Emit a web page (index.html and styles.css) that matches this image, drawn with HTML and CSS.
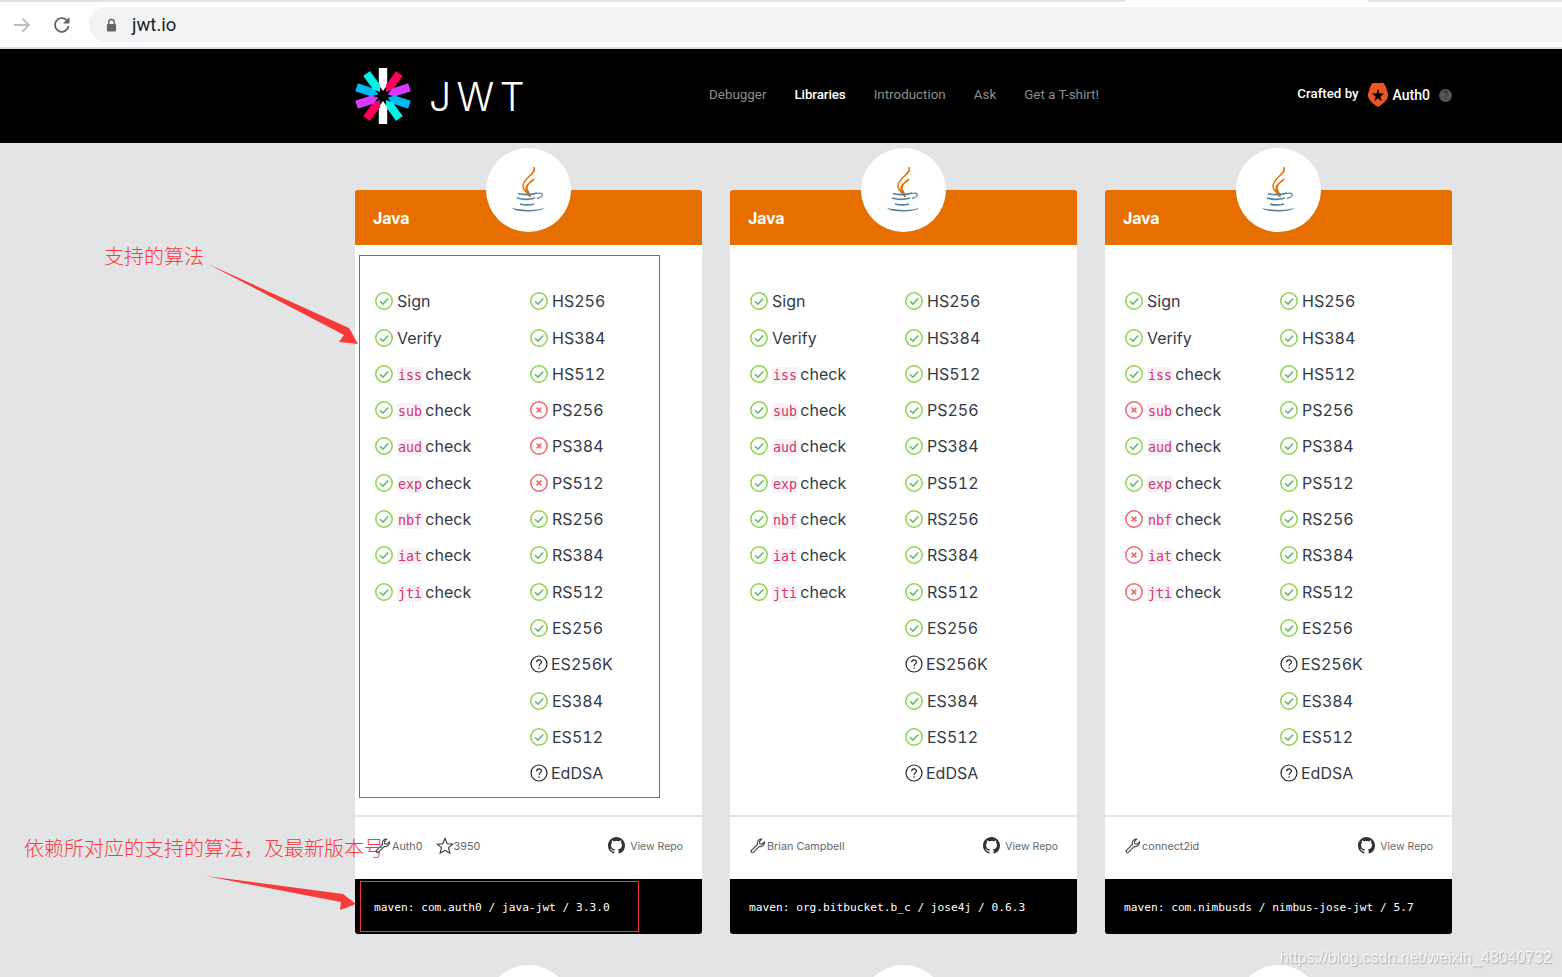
FILE: index.html
```html
<!DOCTYPE html>
<html lang="en">
<head>
    <meta charset="UTF-8">
    <meta name="viewport" content="width=device-width, initial-scale=1.0">
    <title>JWT Libraries</title>
    <link rel="stylesheet" href="styles.css">
</head>
<body>
    <svg class="sprites" width="0" height="0">
        <symbol id="ok" viewBox="0 0 18 18">
            <circle cx="9" cy="9" r="8.200" fill="none" stroke="#8bd44a" stroke-width="1.500"/>
            <path d="M5 9.300l3 2.800 5.200-5.600" fill="none" stroke="#5fbb68" stroke-width="1.500"/>
        </symbol>
        <symbol id="no" viewBox="0 0 18 18">
            <circle cx="9" cy="9" r="8.200" fill="none" stroke="#f4616c" stroke-width="1.500"/>
            <path d="M6.600 6.600l4.800 4.800M11.400 6.600l-4.800 4.800" fill="none" stroke="#f4616c" stroke-width="1.500"/>
        </symbol>
        <symbol id="maybe" viewBox="0 0 18 18">
            <circle cx="9" cy="9" r="8" fill="none" stroke="#222" stroke-width="1.200"/>
            <path d="M6.700 7.200c0-3 4.700-3 4.700-.2 0 1.800-2.300 1.900-2.300 3.900" fill="none" stroke="#222" stroke-width="1.200"/>
            <circle cx="9.100" cy="13" r=".8" fill="#222"/>
        </symbol>
        <symbol id="wrench" viewBox="0 0 16 16">
            <path d="M1.200 12.600l6.300-6.100c-.7-2.400.5-5 3.400-5.400l.8.100-2.300 2.400.4 2.200 2.200.5 2.400-2.300c.4 3-2.300 5.300-5 4.400l-6 6c-1.200 1-2.800-.7-2-1.800z" fill="none" stroke="#444" stroke-width="1.100"/>
        </symbol>
        <symbol id="star" viewBox="0 0 18 18">
            <path d="M9 1.500l2.200 5.200 5.600.4-4.300 3.600 1.400 5.500L9 13.300l-4.900 2.900 1.400-5.500L1.200 7.100l5.600-.4z" fill="none" stroke="#333" stroke-width="1.100"/>
        </symbol>
        <symbol id="github" viewBox="0 0 16 16">
            <path fill="#333" d="M8 0C3.580 0 0 3.580 0 8c0 3.540 2.290 6.530 5.470 7.590.4.070.55-.17.55-.38 0-.19-.01-.82-.01-1.490-2.010.37-2.530-.49-2.690-.94-.09-.23-.48-.94-.82-1.130-.28-.15-.68-.52-.01-.53.63-.01 1.080.58 1.230.82.72 1.210 1.870.87 2.330.66.070-.52.280-.87.510-1.070-1.780-.2-3.640-.89-3.640-3.950 0-.87.310-1.590.820-2.150-.08-.2-.36-1.020.08-2.120 0 0 .67-.21 2.200.82.640-.18 1.320-.27 2-.27s1.360.09 2 .27c1.530-1.040 2.200-.82 2.200-.82.44 1.100.160 1.920.08 2.120.51.560.82 1.270.82 2.150 0 3.070-1.870 3.750-3.650 3.950.29.25.54.73.54 1.480 0 1.070-.01 1.930-.01 2.200 0 .210.15.460.55.380A8.010 8.010 0 0 0 16 8c0-4.420-3.580-8-8-8z"/>
        </symbol>
        <symbol id="java" viewBox="0 0 36 47">
            <path d="M23 0c3 7-12 11-11 20 .6 4 5 6 7 10-1-3-4-5-4-9 0-4 6-6 8-9-4 3-8 6-7 10 .6 3 4 5 3 8" fill="#fff" stroke="#e76f00" stroke-width="1.500"/>
            <path d="M7 26.500c4 1.500 14 1.500 19-.5M6 31c5 1.500 13 1.500 18 0M9 37c4 1 10 1 14 0" fill="none" stroke="#5382a1" stroke-width="1.800"/>
            <path d="M26 26.500c6-2 8 3 0 5" fill="none" stroke="#5382a1" stroke-width="1.300"/>
            <path d="M1 41c8 2 24 3 32 0-2 3.500-22 5-30 1.500z" fill="#5382a1"/>
        </symbol>
        <symbol id="auth0" viewBox="0 0 20 24">
            <path fill="#eb5424" d="M4.500 0h11l2.300 3.500L20 11c.6 4.500-3 8.700-10 13C3 19.700-.6 15.500 0 11l2.200-7.500zM10 5.500l-1.500 5H3.800l3.900 2.900-1.500 4.800 3.800-3 3.800 3-1.500-4.800 3.900-2.900h-4.700z"/>
        </symbol>
        <symbol id="ray" viewBox="0 0 56 56">
            <path d="M23.800 0h8.400v17L28 23l-4.200-6z"/>
        </symbol>
    </svg>

    <div class="browser-tabs">
        <div class="tab-line"></div>
        <div class="tab-active"></div>
        <div class="tab-rest"></div>
    </div>
    <div class="toolbar">
        <svg class="tool-icon" viewBox="0 0 18 18"><path d="M1 9h15M9.500 2.500L16 9l-6.500 6.500" fill="none" stroke="#bdbdbd" stroke-width="1.800"/></svg>
        <svg class="tool-icon" viewBox="0 0 18 18"><path d="M15.500 10a6.800 6.800 0 1 1-1.900-5.800" fill="none" stroke="#666" stroke-width="1.800"/><path d="M16.500 1v6.500H10z" fill="#666"/></svg>
        <div class="address">
            <svg class="lock" viewBox="0 0 12 14"><path d="M3 6V4a3 3 0 0 1 6 0v2" fill="none" stroke="#666" stroke-width="1.500"/><rect x="1" y="6" width="10" height="8" rx="1" fill="#666"/></svg>
            <span>jwt.io</span>
        </div>
    </div>

    <header class="site-header">
        <div class="header-inner">
            <div class="brand">
                <svg class="brand-mark" viewBox="0 0 56 56">
                    <use href="#ray" fill="#fff"/>
                    <use href="#ray" fill="#fb015b" transform="rotate(36 28 28)"/>
                    <use href="#ray" fill="#d63aff" transform="rotate(72 28 28)"/>
                    <use href="#ray" fill="#00b9f1" transform="rotate(108 28 28)"/>
                    <use href="#ray" fill="#00f2e6" transform="rotate(144 28 28)"/>
                    <use href="#ray" fill="#fff" transform="rotate(180 28 28)"/>
                    <use href="#ray" fill="#fb015b" transform="rotate(216 28 28)"/>
                    <use href="#ray" fill="#d63aff" transform="rotate(252 28 28)"/>
                    <use href="#ray" fill="#00b9f1" transform="rotate(288 28 28)"/>
                    <use href="#ray" fill="#00f2e6" transform="rotate(324 28 28)"/>
                </svg>
                <span class="brand-name">JWT</span>
            </div>
            <nav class="nav">
                <a>Debugger</a>
                <a class="current">Libraries</a>
                <a>Introduction</a>
                <a>Ask</a>
                <a>Get a T-shirt!</a>
            </nav>
            <div class="crafted">
                <span class="crafted-by">Crafted by</span>
                <svg class="auth0-logo"><use href="#auth0"/></svg>
                <span class="auth0-name">Auth0</span>
                <span class="help">?</span>
            </div>
        </div>
    </header>

    <main class="cards">
        <!-- Auth0 -->
        <section class="card">
            <div class="card-head">Java</div>
            <div class="card-logo"><svg><use href="#java"/></svg></div>
            <div class="card-body">
                <ul class="checks">
                    <li><svg class="icon"><use href="#ok"/></svg>Sign</li>
                    <li><svg class="icon"><use href="#ok"/></svg>Verify</li>
                    <li><svg class="icon"><use href="#ok"/></svg><code>iss</code> check</li>
                    <li><svg class="icon"><use href="#ok"/></svg><code>sub</code> check</li>
                    <li><svg class="icon"><use href="#ok"/></svg><code>aud</code> check</li>
                    <li><svg class="icon"><use href="#ok"/></svg><code>exp</code> check</li>
                    <li><svg class="icon"><use href="#ok"/></svg><code>nbf</code> check</li>
                    <li><svg class="icon"><use href="#ok"/></svg><code>iat</code> check</li>
                    <li><svg class="icon"><use href="#ok"/></svg><code>jti</code> check</li>
                </ul>
                <ul class="checks">
                    <li><svg class="icon"><use href="#ok"/></svg>HS256</li>
                    <li><svg class="icon"><use href="#ok"/></svg>HS384</li>
                    <li><svg class="icon"><use href="#ok"/></svg>HS512</li>
                    <li><svg class="icon"><use href="#no"/></svg>PS256</li>
                    <li><svg class="icon"><use href="#no"/></svg>PS384</li>
                    <li><svg class="icon"><use href="#no"/></svg>PS512</li>
                    <li><svg class="icon"><use href="#ok"/></svg>RS256</li>
                    <li><svg class="icon"><use href="#ok"/></svg>RS384</li>
                    <li><svg class="icon"><use href="#ok"/></svg>RS512</li>
                    <li><svg class="icon"><use href="#ok"/></svg>ES256</li>
                    <li class="unknown"><svg class="icon"><use href="#maybe"/></svg>ES256K</li>
                    <li><svg class="icon"><use href="#ok"/></svg>ES384</li>
                    <li><svg class="icon"><use href="#ok"/></svg>ES512</li>
                    <li class="unknown"><svg class="icon"><use href="#maybe"/></svg>EdDSA</li>
                </ul>
            </div>
            <div class="card-meta">
                <svg class="wrench"><use href="#wrench"/></svg>
                <span class="author">Auth0</span>
                <svg class="star"><use href="#star"/></svg>
                <span class="stars">3950</span>
                <a class="repo"><svg class="github"><use href="#github"/></svg>View Repo</a>
            </div>
            <div class="card-install">maven: com.auth0 / java-jwt / 3.3.0</div>
        </section>

        <!-- Bitbucket -->
        <section class="card">
            <div class="card-head">Java</div>
            <div class="card-logo"><svg><use href="#java"/></svg></div>
            <div class="card-body">
                <ul class="checks">
                    <li><svg class="icon"><use href="#ok"/></svg>Sign</li>
                    <li><svg class="icon"><use href="#ok"/></svg>Verify</li>
                    <li><svg class="icon"><use href="#ok"/></svg><code>iss</code> check</li>
                    <li><svg class="icon"><use href="#ok"/></svg><code>sub</code> check</li>
                    <li><svg class="icon"><use href="#ok"/></svg><code>aud</code> check</li>
                    <li><svg class="icon"><use href="#ok"/></svg><code>exp</code> check</li>
                    <li><svg class="icon"><use href="#ok"/></svg><code>nbf</code> check</li>
                    <li><svg class="icon"><use href="#ok"/></svg><code>iat</code> check</li>
                    <li><svg class="icon"><use href="#ok"/></svg><code>jti</code> check</li>
                </ul>
                <ul class="checks">
                    <li><svg class="icon"><use href="#ok"/></svg>HS256</li>
                    <li><svg class="icon"><use href="#ok"/></svg>HS384</li>
                    <li><svg class="icon"><use href="#ok"/></svg>HS512</li>
                    <li><svg class="icon"><use href="#ok"/></svg>PS256</li>
                    <li><svg class="icon"><use href="#ok"/></svg>PS384</li>
                    <li><svg class="icon"><use href="#ok"/></svg>PS512</li>
                    <li><svg class="icon"><use href="#ok"/></svg>RS256</li>
                    <li><svg class="icon"><use href="#ok"/></svg>RS384</li>
                    <li><svg class="icon"><use href="#ok"/></svg>RS512</li>
                    <li><svg class="icon"><use href="#ok"/></svg>ES256</li>
                    <li class="unknown"><svg class="icon"><use href="#maybe"/></svg>ES256K</li>
                    <li><svg class="icon"><use href="#ok"/></svg>ES384</li>
                    <li><svg class="icon"><use href="#ok"/></svg>ES512</li>
                    <li class="unknown"><svg class="icon"><use href="#maybe"/></svg>EdDSA</li>
                </ul>
            </div>
            <div class="card-meta">
                <svg class="wrench"><use href="#wrench"/></svg>
                <span class="author">Brian Campbell</span>
                <a class="repo"><svg class="github"><use href="#github"/></svg>View Repo</a>
            </div>
            <div class="card-install">maven: org.bitbucket.b_c / jose4j / 0.6.3</div>
        </section>

        <!-- Nimbus -->
        <section class="card">
            <div class="card-head">Java</div>
            <div class="card-logo"><svg><use href="#java"/></svg></div>
            <div class="card-body">
                <ul class="checks">
                    <li><svg class="icon"><use href="#ok"/></svg>Sign</li>
                    <li><svg class="icon"><use href="#ok"/></svg>Verify</li>
                    <li><svg class="icon"><use href="#ok"/></svg><code>iss</code> check</li>
                    <li><svg class="icon"><use href="#no"/></svg><code>sub</code> check</li>
                    <li><svg class="icon"><use href="#ok"/></svg><code>aud</code> check</li>
                    <li><svg class="icon"><use href="#ok"/></svg><code>exp</code> check</li>
                    <li><svg class="icon"><use href="#no"/></svg><code>nbf</code> check</li>
                    <li><svg class="icon"><use href="#no"/></svg><code>iat</code> check</li>
                    <li><svg class="icon"><use href="#no"/></svg><code>jti</code> check</li>
                </ul>
                <ul class="checks">
                    <li><svg class="icon"><use href="#ok"/></svg>HS256</li>
                    <li><svg class="icon"><use href="#ok"/></svg>HS384</li>
                    <li><svg class="icon"><use href="#ok"/></svg>HS512</li>
                    <li><svg class="icon"><use href="#ok"/></svg>PS256</li>
                    <li><svg class="icon"><use href="#ok"/></svg>PS384</li>
                    <li><svg class="icon"><use href="#ok"/></svg>PS512</li>
                    <li><svg class="icon"><use href="#ok"/></svg>RS256</li>
                    <li><svg class="icon"><use href="#ok"/></svg>RS384</li>
                    <li><svg class="icon"><use href="#ok"/></svg>RS512</li>
                    <li><svg class="icon"><use href="#ok"/></svg>ES256</li>
                    <li class="unknown"><svg class="icon"><use href="#maybe"/></svg>ES256K</li>
                    <li><svg class="icon"><use href="#ok"/></svg>ES384</li>
                    <li><svg class="icon"><use href="#ok"/></svg>ES512</li>
                    <li class="unknown"><svg class="icon"><use href="#maybe"/></svg>EdDSA</li>
                </ul>
            </div>
            <div class="card-meta">
                <svg class="wrench"><use href="#wrench"/></svg>
                <span class="author">connect2id</span>
                <a class="repo"><svg class="github"><use href="#github"/></svg>View Repo</a>
            </div>
            <div class="card-install">maven: com.nimbusds / nimbus-jose-jwt / 5.7</div>
        </section>

        <!-- next row, only the logos show above the fold -->
        <section class="card"><div class="card-head"></div><div class="card-logo"></div></section>
        <section class="card"><div class="card-head"></div><div class="card-logo"></div></section>
        <section class="card"><div class="card-head"></div><div class="card-logo"></div></section>
    </main>

    <!-- red marks someone drew over the screenshot -->
    <div class="mark mark-list"></div>
    <div class="mark mark-install"></div>
    <div class="note note-algos">支持的算法</div>
    <div class="note note-deps">依赖所对应的支持的算法，及最新版本号</div>
    <svg class="arrows" viewBox="0 0 1562 977">
        <path d="M208 264L349 328L358 344L339 342L344 335z" fill="#f83a3a"/>
        <path d="M206 876L343 894L356 904L340 910L341 902z" fill="#f83a3a"/>
    </svg>
    <div class="watermark">https://blog.csdn.net/weixin_48040732</div>
</body>
</html>
```

FILE: styles.css
```css
* {
    margin: 0;
    padding: 0;
    box-sizing: border-box;
}

html, body {
    height: 977px;
    overflow: hidden;
}

body {
    position: relative;
    font-family: 'Inter', 'Liberation Sans', sans-serif;
    background-color: #e3e4e6;
    color: #333a45;
}

ul {
    list-style: none;
}

.sprites {
    position: absolute;
}

/* browser chrome */
.browser-tabs {
    display: flex;
    height: 2px;
    background-color: #dee1e6;
}

.tab-line {
    width: 1125px;
}

.tab-active {
    width: 243px;
    background-color: #fff;
}

.toolbar {
    display: flex;
    align-items: center;
    height: 47px;
    padding: 5px 0 5px 13px;
    background-color: #fff;
    border-bottom: 2px solid #dcdee1;
}

.tool-icon {
    width: 18px;
    height: 18px;
    margin-right: 22px;
}

.tool-icon + .tool-icon {
    margin-right: 18px;
}

.address {
    flex: 1;
    display: flex;
    align-items: center;
    gap: 15px;
    height: 35px;
    padding-left: 17px;
    background-color: #f1f3f4;
    border-radius: 18px 0 0 18px;
    font-family: 'Roboto', sans-serif;
    font-size: 18.5px;
    color: #202124;
}

.lock {
    width: 11px;
    height: 14px;
}

/* site header */
.site-header {
    height: 94px;
    background-color: #000;
}

.header-inner {
    display: flex;
    align-items: center;
    width: 1097px;
    height: 100%;
    margin-left: 355px;
}

.brand {
    display: flex;
    align-items: center;
    width: 354px;
    gap: 18px;
}

.brand-mark {
    width: 56px;
    height: 56px;
}

.brand-name {
    font-size: 39px;
    font-weight: 300;
    letter-spacing: 5.5px;
    color: #fff;
}

.nav {
    display: flex;
    gap: 28px;
    margin-bottom: 3px;
    font-family: 'Roboto', sans-serif;
    font-size: 13.4px;
    color: #8f8f8f;
}

.nav .current {
    color: #fff;
    font-weight: 500;
    letter-spacing: -0.1px;
}

.crafted {
    display: flex;
    align-items: center;
    margin-left: auto;
    margin-bottom: 2px;
    font-family: 'Roboto', sans-serif;
    font-size: 13.3px;
    color: #fff;
}

.crafted-by {
    margin-right: 9px;
    margin-top: -4px;
    font-weight: 500;
}

.auth0-logo {
    width: 20px;
    height: 24px;
    margin-right: 5px;
}

.auth0-name {
    margin-right: 9px;
    font-size: 14px;
    font-weight: 500;
}

.help {
    width: 13px;
    height: 13px;
    border-radius: 50%;
    background-color: #555;
    color: #222;
    font-size: 10px;
    line-height: 13px;
    text-align: center;
}

/* cards */
.cards {
    display: grid;
    grid-template-columns: repeat(3, 347px);
    column-gap: 28px;
    row-gap: 73px;
    height: 834px;
    padding: 47px 0 0 355px;
    overflow: hidden;
}

.card {
    position: relative;
    height: 744px;
    display: flex;
    flex-direction: column;
}

.card-head {
    height: 55px;
    padding: 18px 0 0 18px;
    background-color: #e76f00;
    border-radius: 3px 3px 0 0;
    color: #fff;
    font-size: 16px;
    font-weight: 700;
    line-height: 20px;
    letter-spacing: -0.2px;
}

.card-logo {
    position: absolute;
    top: -42px;
    left: 131px;
    width: 85px;
    height: 84px;
    display: flex;
    align-items: center;
    justify-content: center;
    background-color: #fff;
    border-radius: 50%;
}

.card-logo svg {
    width: 36px;
    height: 47px;
}

.card-body {
    display: grid;
    grid-template-columns: 155px 1fr;
    height: 572px;
    padding: 38.3px 0 0 20px;
    background-color: #fff;
    border-bottom: 2px solid #e3e4e6;
}

.checks li {
    height: 36.3px;
    font-size: 16px;
    font-variant-numeric: tabular-nums;
    line-height: 36.3px;
    white-space: nowrap;
}

.icon {
    display: inline-block;
    width: 18px;
    height: 18px;
    margin-right: 4px;
    vertical-align: -3px;
}

.unknown .icon {
    margin-right: 3px;
}

code {
    padding: 1px;
    margin-right: -2px;
    background-color: #f8f2f6;
    border-radius: 3px;
    font-family: 'DejaVu Sans Mono', monospace;
    font-size: 13.3px;
    color: #d6336c;
}

.card-meta {
    display: flex;
    align-items: center;
    height: 62px;
    padding: 0 19px 4px 20px;
    background-color: #fff;
    font-size: 10.8px;
    color: #666;
}

.wrench {
    width: 16px;
    height: 16px;
    margin-right: 1px;
}

.star {
    width: 18px;
    height: 18px;
    margin: 0 0 0 13px;
}

.repo {
    display: flex;
    align-items: center;
    gap: 5px;
    margin-left: auto;
    padding-top: 1px;
    font-size: 10.5px;
    color: #666;
}

.github {
    width: 17px;
    height: 17px;
    margin-top: -2px;
}

.card-install {
    height: 55px;
    padding-left: 19px;
    background-color: #000;
    border-radius: 0 0 3px 3px;
    color: #fff;
    font-family: 'DejaVu Sans Mono', monospace;
    font-size: 11.2px;
    line-height: 57px;
}

/* annotations */
.mark {
    position: absolute;
    border: 1px solid #ee3a3f;
}

.mark-list {
    left: 359px;
    top: 255px;
    width: 301px;
    height: 543px;
}

.mark-install {
    left: 360px;
    top: 881px;
    width: 279px;
    height: 51px;
}

.note {
    position: absolute;
    font-family: 'Noto Sans CJK SC', sans-serif;
    font-size: 20px;
    font-weight: 300;
    line-height: 28px;
    color: #f83a3a;
    white-space: nowrap;
}

.note-algos {
    left: 104px;
    top: 242px;
}

.note-deps {
    left: 24px;
    top: 834px;
}

.arrows {
    position: absolute;
    left: 0;
    top: 0;
    width: 1562px;
    height: 977px;
    pointer-events: none;
}

.watermark {
    position: absolute;
    right: 10px;
    top: 949px;
    font-family: 'Liberation Sans', sans-serif;
    font-size: 16px;
    color: rgba(255, 255, 255, 0.75);
    text-shadow: 1px 1px 1px rgba(130, 130, 130, 0.55);
}
```
